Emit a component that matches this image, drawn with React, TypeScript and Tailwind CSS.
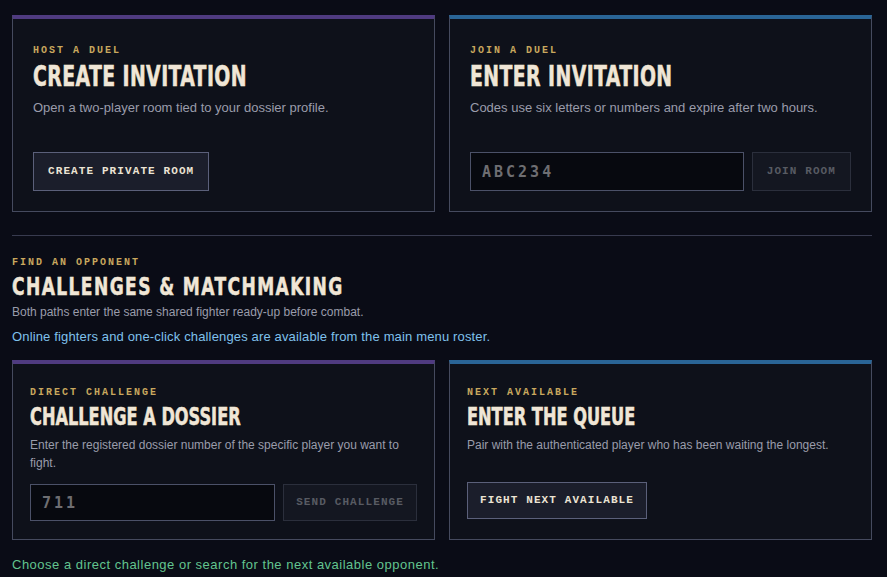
import React from "react";

const mono = "font-['Liberation_Mono','Courier_New',monospace]";
const narrow = "font-['DejaVu_Sans_Condensed','Liberation_Sans_Narrow',sans-serif]";

function Eyebrow({ children }: { children: React.ReactNode }) {
  return (
    <div className={`${mono} font-bold text-[10px] leading-[14px] tracking-[0.2em] text-[#c9a85e]`}>
      {children}
    </div>
  );
}

function Title({ children, size }: { children: React.ReactNode; size: "lg" | "sm" }) {
  return (
    <h2
      className={`${narrow} font-bold text-[#f0e6d6] [-webkit-text-stroke:0.4px_#f0e6d6] ${
        size === "lg"
          ? "mt-[5px] h-[28px] text-[21px] leading-[28px] tracking-[0.4px]"
          : "mt-[5px] h-[24px] text-[18px] leading-[24px] tracking-[0px]"
      }`}
    >
      <span className="inline-block origin-center scale-y-135">{children}</span>
    </h2>
  );
}

function PrimaryButton({ children, big }: { children: React.ReactNode; big?: boolean }) {
  return (
    <button
      className={`${mono} shrink-0 border border-[#5b607a] bg-[#1b1e2b] font-bold text-[11px] tracking-[0.1em] text-[#ece4d4] ${
        big ? "h-[39px] px-[14px]" : "h-[37px] px-[12px]"
      }`}
    >
      {children}
    </button>
  );
}

function DisabledButton({ children, big }: { children: React.ReactNode; big?: boolean }) {
  return (
    <button
      disabled
      className={`${mono} shrink-0 border border-[#2b2f3c] bg-[#141721] font-bold text-[11px] tracking-[0.1em] text-[#585b63] ${
        big ? "h-[39px] px-[14px]" : "h-[37px] px-[12px]"
      }`}
    >
      {children}
    </button>
  );
}

function CodeInput({ placeholder, big }: { placeholder: string; big?: boolean }) {
  return (
    <input
      readOnly
      placeholder={placeholder}
      className={`min-w-0 flex-1 border border-[#4b5168] bg-[#07090f] pl-[11px] font-['DejaVu_Sans_Mono',monospace] font-bold text-[15px] tracking-[0.2em] text-[#6e6e72] outline-none placeholder:text-[#6e6e72] ${
        big ? "h-[39px]" : "h-[37px]"
      }`}
    />
  );
}

export default function App() {
  return (
    <div className="min-h-[577px] w-full bg-[#0a0c16] pl-3 pt-[15px] font-['Liberation_Sans',Arial,sans-serif]">
      <div className="w-[860px]">
        <div className="grid grid-cols-2 gap-[14px]">
          <div className="flex flex-col border border-t-4 border-[#454a5e] border-t-[#4f3b80] bg-[#0e111a] px-5 pb-5 pt-[25px]">
            <Eyebrow>HOST A DUEL</Eyebrow>
            <Title size="lg">CREATE INVITATION</Title>
            <p className="mt-[8px] text-[13px] leading-[18px] text-[#9a9cab]">
              Open a two-player room tied to your dossier profile.
            </p>
            <div className="mt-[35px] flex">
              <PrimaryButton big>CREATE PRIVATE ROOM</PrimaryButton>
            </div>
          </div>
          <div className="flex flex-col border border-t-4 border-[#454a5e] border-t-[#2a6596] bg-[#0e111a] px-5 pb-5 pt-[25px]">
            <Eyebrow>JOIN A DUEL</Eyebrow>
            <Title size="lg">ENTER INVITATION</Title>
            <p className="mt-[8px] text-[13px] leading-[18px] text-[#9a9cab]">
              Codes use six letters or numbers and expire after two hours.
            </p>
            <div className="mt-[35px] flex gap-2">
              <CodeInput placeholder="ABC234" big />
              <DisabledButton big>JOIN ROOM</DisabledButton>
            </div>
          </div>
        </div>

        <div className="mt-[23px] h-px bg-[#383b4f]" />

        <div className="mt-[20px]">
          <Eyebrow>FIND AN OPPONENT</Eyebrow>
          <h1
            className={`${narrow} mt-[3px] h-[26px] text-[19px] font-bold leading-[26px] tracking-[1.4px] text-[#f0e6d6] [-webkit-text-stroke:0.4px_#f0e6d6]`}
          >
            <span className="inline-block origin-center scale-y-135">CHALLENGES &amp; MATCHMAKING</span>
          </h1>
          <p className="mt-[5px] text-[12px] leading-[16px] text-[#9a9cab]">
            Both paths enter the same shared fighter ready-up before combat.
          </p>
          <p className="mt-[9px] text-[13px] leading-[16px] tracking-[0.15px] text-[#7fc1ec]">
            Online fighters and one-click challenges are available from the main menu roster.
          </p>
        </div>

        <div className="mt-[15px] grid grid-cols-2 gap-[14px]">
          <div className="flex flex-col border border-t-4 border-[#454a5e] border-t-[#4f3b80] bg-[#0e111a] px-[17px] pb-[18px] pt-[22px]">
            <Eyebrow>DIRECT CHALLENGE</Eyebrow>
            <Title size="sm">CHALLENGE A DOSSIER</Title>
            <p className="mt-[7px] text-[12px] leading-[18px] text-[#9a9cab]">
              Enter the registered dossier number of the specific player you want to fight.
            </p>
            <div className="mt-[12px] flex gap-2">
              <CodeInput placeholder="711" />
              <DisabledButton>SEND CHALLENGE</DisabledButton>
            </div>
          </div>
          <div className="flex flex-col border border-t-4 border-[#454a5e] border-t-[#2a6596] bg-[#0e111a] px-[17px] pb-[18px] pt-[22px]">
            <Eyebrow>NEXT AVAILABLE</Eyebrow>
            <Title size="sm">ENTER THE QUEUE</Title>
            <p className="mt-[7px] text-[12px] leading-[18px] text-[#9a9cab]">
              Pair with the authenticated player who has been waiting the longest.
            </p>
            <div className="mt-[28px] flex">
              <PrimaryButton>FIGHT NEXT AVAILABLE</PrimaryButton>
            </div>
          </div>
        </div>

        <p className="mt-[17px] text-[13px] leading-[16px] tracking-[0.5px] text-[#62c48f]">
          Choose a direct challenge or search for the next available opponent.
        </p>
      </div>
    </div>
  );
}
